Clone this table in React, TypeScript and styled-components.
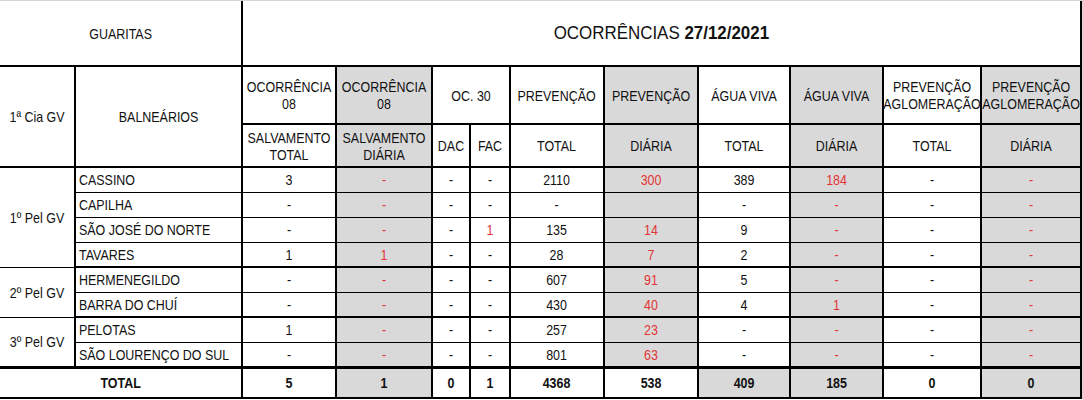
import React from 'react';
import styled, { createGlobalStyle } from 'styled-components';

const GlobalStyle = createGlobalStyle`
  html, body {
    margin: 0;
    background: #fff;
  }
  body {
    font-family: "Liberation Sans", Arial, sans-serif;
    color: #111;
  }
`;

interface Line {
  name: string;
  values: string[];
  alert?: number[];
}

interface Group {
  label: string;
  rows: Line[];
}

const COL_WIDTHS = [75, 167, 94, 96, 38, 40, 93, 94, 92, 93, 98, 100];
const GRAY_COLS = [1, 5, 7, 9];
const RED_COLS = [1, 5, 7, 9];

const groups: Group[] = [
  {
    label: '1º Pel GV',
    rows: [
      { name: 'CASSINO', values: ['3', '-', '-', '-', '2110', '300', '389', '184', '-', '-'] },
      { name: 'CAPILHA', values: ['-', '-', '-', '-', '-', '', '-', '-', '-', '-'] },
      { name: 'SÃO JOSÉ DO NORTE', values: ['-', '-', '-', '1', '135', '14', '9', '-', '-', '-'], alert: [3] },
      { name: 'TAVARES', values: ['1', '1', '-', '-', '28', '7', '2', '-', '-', '-'] },
    ],
  },
  {
    label: '2º Pel GV',
    rows: [
      { name: 'HERMENEGILDO', values: ['-', '-', '-', '-', '607', '91', '5', '-', '-', '-'] },
      { name: 'BARRA DO CHUÍ', values: ['-', '-', '-', '-', '430', '40', '4', '1', '-', '-'] },
    ],
  },
  {
    label: '3º Pel GV',
    rows: [
      { name: 'PELOTAS', values: ['1', '-', '-', '-', '257', '23', '-', '-', '-', '-'] },
      { name: 'SÃO LOURENÇO DO SUL', values: ['-', '-', '-', '-', '801', '63', '-', '-', '-', '-'] },
    ],
  },
];

const totals = ['5', '1', '0', '1', '4368', '538', '409', '185', '0', '0'];
const TOTAL_GRAY = [1, 6, 7, 9];

const topHeads: { label: React.ReactNode; gray?: boolean; span?: number }[] = [
  { label: <>OCORRÊNCIA<br />08</> },
  { label: <>OCORRÊNCIA<br />08</>, gray: true },
  { label: 'OC. 30', span: 2 },
  { label: 'PREVENÇÃO' },
  { label: 'PREVENÇÃO', gray: true },
  { label: 'ÁGUA VIVA' },
  { label: 'ÁGUA VIVA', gray: true },
  { label: <>PREVENÇÃO<br />AGLOMERAÇÃO</> },
  { label: <>PREVENÇÃO<br />AGLOMERAÇÃO</>, gray: true },
];

const subHeads: { label: React.ReactNode; gray?: boolean }[] = [
  { label: <>SALVAMENTO<br />TOTAL</> },
  { label: <>SALVAMENTO<br />DIÁRIA</>, gray: true },
  { label: 'DAC' },
  { label: 'FAC' },
  { label: 'TOTAL' },
  { label: 'DIÁRIA', gray: true },
  { label: 'TOTAL' },
  { label: 'DIÁRIA', gray: true },
  { label: 'TOTAL' },
  { label: 'DIÁRIA', gray: true },
];

const App = () => {
  return (
    <>
      <GlobalStyle />
      <Frame>
        <Sheet>
          <colgroup>
            {COL_WIDTHS.map((w, i) => (
              <Col key={i} $w={w} />
            ))}
          </colgroup>
          <thead>
            <TitleRow>
              <HeadCell colSpan={2}>
                <Squeeze>GUARITAS</Squeeze>
              </HeadCell>
              <HeadCell colSpan={10}>
                <Title>
                  OCORRÊNCIAS <strong>27/12/2021</strong>
                </Title>
              </HeadCell>
            </TitleRow>
            <HeadRow $h={58}>
              <HeadCell rowSpan={2}>
                <Squeeze>1ª Cia GV</Squeeze>
              </HeadCell>
              <HeadCell rowSpan={2}>
                <Squeeze>BALNEÁRIOS</Squeeze>
              </HeadCell>
              {topHeads.map((h, i) => (
                <HeadCell key={i} colSpan={h.span} $gray={h.gray}>
                  <Squeeze>{h.label}</Squeeze>
                </HeadCell>
              ))}
            </HeadRow>
            <HeadRow $h={43}>
              {subHeads.map((h, i) => (
                <HeadCell key={i} $gray={h.gray}>
                  <Squeeze>{h.label}</Squeeze>
                </HeadCell>
              ))}
            </HeadRow>
          </thead>
          <tbody>
            {groups.map((g) =>
              g.rows.map((r, ri) => (
                <BodyRow key={r.name} $groupEnd={ri === g.rows.length - 1}>
                  {ri === 0 && (
                    <GroupCell rowSpan={g.rows.length}>
                      <Squeeze>{g.label}</Squeeze>
                    </GroupCell>
                  )}
                  <NameCell>
                    <Squeeze $left>{r.name}</Squeeze>
                  </NameCell>
                  {r.values.map((v, i) => (
                    <Cell
                      key={i}
                      $gray={GRAY_COLS.includes(i)}
                      $red={RED_COLS.includes(i) || (r.alert ?? []).includes(i)}
                    >
                      <Squeeze>{v}</Squeeze>
                    </Cell>
                  ))}
                </BodyRow>
              ))
            )}
            <TotalRow>
              <Cell colSpan={2}>
                <Squeeze>TOTAL</Squeeze>
              </Cell>
              {totals.map((v, i) => (
                <Cell key={i} $gray={TOTAL_GRAY.includes(i)}>
                  <Squeeze>{v}</Squeeze>
                </Cell>
              ))}
            </TotalRow>
          </tbody>
        </Sheet>
      </Frame>
    </>
  );
};

export default App;

const Frame = styled.div`
  display: inline-block;
  border-top: 1px solid #d4d4d4;
  border-right: 1px solid #d4d4d4;
`;

const Sheet = styled.table`
  width: 1082px;
  table-layout: fixed;
  border-collapse: collapse;
  border-left-style: hidden;
  border-top-style: hidden;
  font-size: 15px;
`;

const Col = styled.col<{ $w: number }>`
  width: ${({ $w }) => $w}px;
`;

const Cell = styled.td<{ $gray?: boolean; $red?: boolean }>`
  border: 2px solid #000;
  border-top-width: 1px;
  border-bottom-width: 1px;
  padding: 0 1px;
  vertical-align: middle;
  white-space: nowrap;
  overflow: visible;
  line-height: 17px;
  background: ${({ $gray }) => ($gray ? '#d9d9d9' : '#fff')};
  color: ${({ $red }) => ($red ? '#e23535' : '#111')};
`;

// the sheet was set in a narrow face; squeeze the regular one to its width
const Squeeze = styled.span<{ $left?: boolean }>`
  display: block;
  margin: ${({ $left }) => ($left ? '0' : '0 -30px')};
  text-align: ${({ $left }) => ($left ? 'left' : 'center')};
  transform: scaleX(0.83);
  transform-origin: ${({ $left }) => ($left ? 'left center' : 'center')};
`;

const Title = styled.span`
  display: block;
  margin: 0 -30px;
  text-align: center;
  font-size: 18px;
  transform: scaleX(0.94);

  strong {
    font-weight: bold;
  }
`;

const HeadCell = styled(Cell).attrs({ as: 'th' })`
  border-width: 2px;
  font-weight: normal;
`;

const GroupCell = styled(Cell)`
  border-bottom-width: 2px;
`;

const NameCell = styled(Cell)`
  padding-left: 3px;
`;

const TitleRow = styled.tr`
  height: 65px;
`;

const HeadRow = styled.tr<{ $h: number }>`
  height: ${({ $h }) => $h}px;
`;

const BodyRow = styled.tr<{ $groupEnd?: boolean }>`
  height: 25px;

  td {
    border-bottom-width: ${({ $groupEnd }) => ($groupEnd ? '2px' : '1px')};
  }
`;

const TotalRow = styled.tr`
  height: 31px;

  td {
    border-top-width: 3px;
    border-bottom-width: 2px;
    font-weight: bold;
    color: #111;
  }
`;
